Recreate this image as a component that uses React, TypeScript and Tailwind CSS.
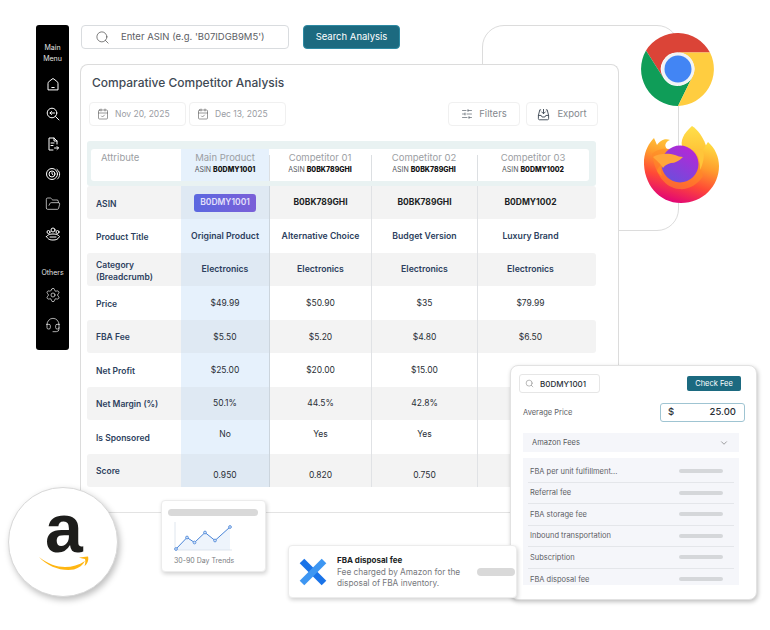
import React from "react";
import { CalendarCheck, ChevronDown, FolderOpen, Headset, Search, Settings, SlidersHorizontal } from "lucide-react";

const rows = [
  { label: "ASIN", values: ["", "B0BK789GHI", "B0BK789GHI", "B0DMY1002"], kind: "code" },
  { label: "Product Title", values: ["Original Product", "Alternative Choice", "Budget Version", "Luxury Brand"], kind: "name" },
  { label: "Category (Breadcrumb)", values: ["Electronics", "Electronics", "Electronics", "Electronics"], kind: "name" },
  { label: "Price", values: ["$49.99", "$50.90", "$35", "$79.99"], kind: "num" },
  { label: "FBA Fee", values: ["$5.50", "$5.20", "$4.80", "$6.50"], kind: "num" },
  { label: "Net Profit", values: ["$25.00", "$20.00", "$15.00", ""], kind: "num" },
  { label: "Net Margin (%)", values: ["50.1%", "44.5%", "42.8%", ""], kind: "num" },
  { label: "Is Sponsored", values: ["No", "Yes", "Yes", ""], kind: "sponsored" },
  { label: "Score", values: ["0.950", "0.820", "0.750", ""], kind: "score" },
];

const fees = ["FBA per unit fulfillment...", "Referral fee", "FBA storage fee", "Inbound transportation", "Subscription", "FBA disposal fee"];

function SideIcon({ children }: { children: React.ReactNode }) {
  return (
    <svg width="16" height="16" viewBox="0 0 16 16" fill="none" stroke="white" strokeWidth="1" strokeLinecap="round" strokeLinejoin="round">
      {children}
    </svg>
  );
}

function Sidebar() {
  return (
    <div className="w-[33px] h-[325px] shrink-0 bg-black rounded-[3px] flex flex-col items-center pt-[17px] text-[#e4e4e4] text-[7px] leading-[11px]">
      <span className="text-center">Main<br />Menu</span>
      <div className="flex flex-col items-center gap-[14px] mt-[12px] text-white">
        <SideIcon>
          <path d="M3 13.5V7.5C3 6.5 3.6 5.8 4.3 5.2L8 2.5L11.7 5.2C12.4 5.8 13 6.5 13 7.5V13.5Z" />
          <path d="M6.8 11.5H9.2" />
        </SideIcon>
        <SideIcon>
          <circle cx="7" cy="7" r="4.8" />
          <path d="M10.5 10.5L14 14M9.5 7H5M6.5 5.5L5 7L6.5 8.5" />
        </SideIcon>
        <SideIcon>
          <path d="M8 14H4V2H9L12 5V8M9 2V5H12" />
          <path d="M6 7H9M6 9.5H8M9.5 12H13.5M12 10.5L13.5 12L12 13.5" />
        </SideIcon>
        <SideIcon>
          <circle cx="7" cy="8" r="5.5" />
          <circle cx="7" cy="8" r="3" />
          <path d="M12 3.5C14 5 15 7 14.5 9.5C14.2 11 13.5 12 12.5 13" />
          <path d="M7 6.5V8L8 8.7" />
        </SideIcon>
        <FolderOpen size={16} strokeWidth={1} />
        <SideIcon>
          <circle cx="8" cy="4" r="2" />
          <circle cx="3.5" cy="6" r="1.5" />
          <circle cx="12.5" cy="6" r="1.5" />
          <path d="M1.5 10.5C3 8.5 5 8 8 8C11 8 13 8.5 14.5 10.5C13 13.5 11 14 8 14C5 14 3 13.5 1.5 10.5Z" />
          <path d="M5 11H11" />
        </SideIcon>
      </div>
      <span className="mt-[25px]">Others</span>
      <div className="flex flex-col items-center gap-[14px] mt-[9px] text-white">
        <Settings size={16} strokeWidth={1} />
        <Headset size={16} strokeWidth={1} />
      </div>
    </div>
  );
}

function ExportIcon() {
  return (
    <svg width="13" height="13" viewBox="0 0 14 14" fill="none" stroke="#3f4a55" strokeWidth="1" strokeLinecap="round" strokeLinejoin="round">
      <path d="M4 2H3L1.5 8V11.5C1.5 12.3 2 12.7 2.7 12.7H11.3C12 12.7 12.5 12.3 12.5 11.5V8L11 2H10" />
      <path d="M1.5 8H4.5L5.5 9.7H8.5L9.5 8H12.5" />
      <path d="M7 1.5V6M5 4.2L7 6.2L9 4.2" />
    </svg>
  );
}

function Toolbar() {
  return (
    <div className="flex items-center mt-[11px] ml-[2px] text-[#9a9da3] text-[8.5px]">
      <div className="w-[97px] h-[24px] border border-[#f0f0f0] rounded-[4px] flex items-center pl-[7px] gap-[6px]">
        <CalendarCheck size={12} strokeWidth={1.2} className="text-[#555]" />
        Nov 20, 2025
      </div>
      <div className="w-[97px] h-[24px] ml-[3px] border border-[#f0f0f0] rounded-[4px] flex items-center pl-[7px] gap-[6px]">
        <CalendarCheck size={12} strokeWidth={1.2} className="text-[#555]" />
        Dec 13, 2025
      </div>
      <div className="w-[72px] h-[24px] ml-[162px] border border-[#f0f0f0] rounded-[4px] flex items-center justify-center gap-[6px] text-[#84888e] text-[9.5px]">
        <SlidersHorizontal size={12} strokeWidth={1.2} className="text-[#3f4a55]" />
        Filters
      </div>
      <div className="w-[72px] h-[24px] ml-[6px] border border-[#f0f0f0] rounded-[4px] flex items-center justify-center gap-[7px] text-[#84888e] text-[9.5px]">
        <ExportIcon />
        Export
      </div>
    </div>
  );
}

function HeadCell({ title, asin, line }: { title: string; asin: string; line?: boolean }) {
  return (
    <div className="relative flex flex-col items-center pt-[3px]">
      {line && <span className="absolute left-0 top-[6px] bottom-0 w-px bg-[#dcdfe2]" />}
      <span className="text-[9.5px] leading-[11px] text-[#9b9ea3]">{title}</span>
      <span className="text-[7px] leading-[14px] text-[#55585c]">
        ASIN <b className="font-extrabold text-[#111]">{asin}</b>
      </span>
    </div>
  );
}

function CompareTable() {
  return (
    <div className="mt-[15px] w-[509px] text-[9px]">
      <div className="h-[45px] bg-[#e9f2f2] rounded-[3px] pt-[8px] pl-[4px] pr-[7px]">
        <div className="h-[32px] bg-white rounded-[3px] grid grid-cols-[90px_88px_102px_106px_112px]">
          <div className="pl-[10px] pt-[3px] text-[9.5px] leading-[11px] text-[#9b9ea3]">Attribute</div>
          <div className="bg-[#e6f1fc]">
            <HeadCell title="Main Product" asin="B0DMY1001" />
          </div>
          <HeadCell title="Competitor 01" asin="B0BK789GHI" line />
          <HeadCell title="Competitor 02" asin="B0BK789GHI" line />
          <HeadCell title="Competitor 03" asin="B0DMY1002" line />
        </div>
      </div>
      <div className="h-[301px] flex flex-col">
        {rows.map((row, i) => {
          const shaded = i % 2 === 0;
          const valueClass =
            row.kind === "code"
              ? "font-bold text-[#1c1f24] text-[8.5px]"
              : row.kind === "name"
                ? "font-semibold text-[#2d3f5e] text-[8.7px]"
                : row.kind === "sponsored"
                  ? "text-[#2a2f36] text-[8.5px] pb-[4px]"
                  : row.kind === "score"
                    ? "text-[#2a2f36] text-[8.5px] pt-[10px]"
                    : "text-[#2a2f36] text-[8.5px] pt-px";
          return (
            <div
              key={row.label}
              className={`flex-1 grid grid-cols-[94px_88px_102px_106px_119px] rounded-[3px] ${shaded ? "bg-[#f3f3f3]" : "bg-white"}`}
            >
              <div className="pl-[9px] pr-[6px] pt-[2px] flex items-center font-semibold text-[8.5px] leading-[12px] text-[#2d3f5e]">{row.label}</div>
              {row.values.map((v, j) => (
                <div
                  key={j}
                  className={`flex items-center justify-center ${valueClass} ${
                    j === 0 ? (shaded ? "bg-[#dfe9f3]" : "bg-[#e6f1fc]") : j === 1 ? "border-l border-[#ccd5dd]" : "border-l border-[#e0e2e5]"
                  } ${j === 3 ? "pr-[13px]" : ""}`}
                >
                  {row.kind === "code" && j === 0 ? (
                    <span className="w-[62px] h-[18px] rounded-[3px] bg-gradient-to-r from-[#5b68e0] to-[#7a5fd8] text-[#e4e1fb] font-semibold flex items-center justify-center">
                      B0DMY1001
                    </span>
                  ) : (
                    v
                  )}
                </div>
              ))}
            </div>
          );
        })}
      </div>
    </div>
  );
}

function ChromeLogo() {
  return (
    <svg width="74" height="74" viewBox="0 0 74 74" className="absolute left-[641px] top-[32px]">
      <path d="M37 20.5H69A37 37 0 0 0 5 18.5L22.5 46A16.5 16.5 0 0 1 37 20.5Z" fill="#db4437" />
      <path d="M5 18.5A37 37 0 0 0 37 74L51 45.5A16.5 16.5 0 0 1 22.5 46Z" fill="#0f9d58" />
      <path d="M69 20.5A37 37 0 0 1 37 74L51 45.5A16.5 16.5 0 0 0 37 20.5Z" fill="#ffcd40" />
      <circle cx="37" cy="37" r="16.5" fill="#f1f3f4" />
      <circle cx="37" cy="37" r="13.5" fill="#4285f4" />
    </svg>
  );
}

function FirefoxLogo() {
  return (
    <svg width="77" height="77" viewBox="0 0 77 77" className="absolute left-[643px] top-[126px]">
      <defs>
        <linearGradient id="ffBody" x1="0.7" y1="0.05" x2="0.35" y2="1">
          <stop offset="0" stopColor="#ffd83f" />
          <stop offset="0.35" stopColor="#ff9b2c" />
          <stop offset="0.65" stopColor="#ff4a36" />
          <stop offset="1" stopColor="#e0007a" />
        </linearGradient>
        <linearGradient id="ffFlame" x1="0.5" y1="0" x2="0.5" y2="1">
          <stop offset="0" stopColor="#ffe04a" />
          <stop offset="1" stopColor="#ffb52e" />
        </linearGradient>
        <linearGradient id="ffGlobe" x1="0.8" y1="0" x2="0.2" y2="1">
          <stop offset="0" stopColor="#b925d6" />
          <stop offset="1" stopColor="#6a4fdc" />
        </linearGradient>
      </defs>
      <path d="M49 0C41 7 36 15 40 23L63 38C68 27 61 8 49 0Z" fill="url(#ffFlame)" />
      <path d="M1 34C2 24 6 17 11 12L14 19C17 15 21 12 27 14C22 16 21 20 24 23L60 24L65 16C72 22 76 31 76 40C76 60 60 77 38 77C16 77 0 58 1 34Z" fill="url(#ffBody)" />
      <path d="M9 28C15 22 24 22 30 24L54 30L60 50C54 60 44 64 36 63C22 62 12 48 9 28Z" fill="#ff8a26" opacity="0.6" />
      <circle cx="37" cy="38" r="18.5" fill="url(#ffGlobe)" />
      <path d="M14 44C16 40 19 37 23 36.500L19.500 38C18 42 17 46 19 50C16 48 14 46 14 44Z" fill="#ff8a26" />
      <path d="M10 31C16 27 26 27 32 29C35 30 37 31 40 31C36 35 32 37 28 37C25 38 22 39 20 42C18 38 13 34 10 31Z" fill="#ffa73a" />
      <path d="M49 22C54 26 58 34 57 44C60 38 62 30 60 24Z" fill="#ffc53a" />
    </svg>
  );
}

function AmazonBadge() {
  return (
    <div className="absolute left-[8px] top-[487px] w-[110px] h-[110px] rounded-full bg-white border border-[#d8d8d8] shadow-[2px_3px_6px_rgba(0,0,0,0.25)]">
      <span className="absolute left-[36px] top-[6px] text-[68px] leading-[68px] font-bold text-[#1d1d1b] [font-family:'Liberation_Sans',sans-serif]">a</span>
      <svg width="52" height="16" viewBox="0 0 52 16" className="absolute left-[29px] top-[67px]">
        <path d="M1 2C10 9 19 12 27 12C34 12 41 10 47 6C45 10 41 13 36 14.5C24 16.5 10 12 1 2Z" fill="#ffb612" />
        <path d="M41 2.5L50 1.5C51 5 49.5 9 46.5 11C47.5 8.5 47.5 5.5 47 4C45.5 3.5 43 3.5 41 2.5Z" fill="#ffb612" />
      </svg>
    </div>
  );
}

function TrendCard() {
  return (
    <div className="absolute left-[161px] top-[500px] w-[105px] h-[72px] bg-white rounded-[4px] border border-[#ececec] shadow-[1px_2px_4px_rgba(0,0,0,0.18)] flex flex-col px-[6px] pt-[8px]">
      <div className="h-[7px] w-[90px] bg-[#d9d9d9] rounded-full" />
      <svg width="60" height="30" viewBox="0 0 60 30" className="mt-[6px] ml-[6px]">
        <path d="M2 27L13 15.5L20.5 20.5L31 10.5L41 18.5L56 5V28H2Z" fill="#eef4fc" />
        <path d="M1 0V28H58" fill="none" stroke="#d7dfea" strokeWidth="0.8" />
        <path d="M2 27L13 15.5L20.5 20.5L31 10.5L41 18.5L56 5" fill="none" stroke="#4a85d8" strokeWidth="1" />
        {[[2, 27], [13, 15.5], [20.5, 20.5], [31, 10.5], [41, 18.5], [56, 5]].map(([x, y]) => (
          <circle key={x} cx={x} cy={y} r="1.4" fill="#cfe0f7" stroke="#4a85d8" strokeWidth="0.8" />
        ))}
      </svg>
      <span className="mt-[4px] ml-[6px] text-[7px] leading-[10px] text-[#7a7d82] whitespace-nowrap">30-90 Day Trends</span>
    </div>
  );
}

function DisposalCard() {
  return (
    <div className="absolute left-[288px] top-[545px] w-[229px] h-[53px] bg-white rounded-[4px] border border-[#ececec] shadow-[1px_2px_4px_rgba(0,0,0,0.18)] flex items-center pl-[10px] z-20">
      <svg width="28" height="28" viewBox="0 0 28 28" className="shrink-0">
        <path d="M3 3L25 25" stroke="#1a73e8" strokeWidth="6.5" />
        <path d="M25 3L3 25" stroke="#3d96f2" strokeWidth="6.5" />
      </svg>
      <div className="ml-[10px] w-[132px]">
        <p className="text-[8px] leading-[11px] font-bold text-[#1c1f24]">FBA disposal fee</p>
        <p className="text-[8.3px] leading-[11px] mt-px text-[#77797d]">Fee charged by Amazon for the disposal of FBA inventory.</p>
      </div>
      <div className="ml-[8px] w-[38px] h-[8px] rounded-full bg-[#d9d9d9]" />
    </div>
  );
}

function FeeCard() {
  return (
    <div className="absolute left-[510px] top-[365px] w-[247px] h-[235px] bg-white rounded-[8px] border border-[#e2e2e2] shadow-[1px_2px_4px_rgba(0,0,0,0.25)] p-[8px] z-10">
      <div className="flex items-center justify-between pr-[7px]">
        <div className="w-[81px] h-[19px] border border-[#e6e6e6] rounded-[3px] flex items-center pl-[5px] gap-[6px] text-[8px] font-medium text-[#2a2f36]">
          <Search size={9} strokeWidth={1.2} className="text-[#666]" />
          B0DMY1001
        </div>
        <div className="w-[54px] h-[15px] bg-[#1c6a80] rounded-[2px] text-white text-[7.5px] flex items-center justify-center">Check Fee</div>
      </div>
      <div className="flex items-center justify-between mt-[10px] pl-[4px] pr-[3px]">
        <span className="text-[7.5px] text-[#5d6065]">Average Price</span>
        <div className="w-[85px] h-[19px] border border-[#9fc4d2] rounded-[3px] flex items-center justify-between pl-[7px] pr-[8px] text-[9.5px] font-medium text-[#2a2f36]">
          <span>$</span>
          <span>25.00</span>
        </div>
      </div>
      <div className="ml-[4px] mr-[9px] mt-[11px] h-[19px] bg-[#f5f6fa] flex items-center justify-between pl-[9px] pr-[10px] text-[7.5px] text-[#55585c]">
        Amazon Fees
        <ChevronDown size={10} strokeWidth={1.2} className="text-[#444]" />
      </div>
      <div className="ml-[4px] mr-[9px] mt-[6px] h-[127px] bg-[#f5f6fa] px-[5px] pt-[3px] overflow-hidden">
        {fees.map((fee) => (
          <div key={fee} className="h-[21.5px] flex items-center justify-between border-b border-[#e4e6ea] pl-[2px] pr-[11px] text-[7.5px] text-[#5d6065] last:border-b-0">
            {fee}
            <span className="w-[44px] h-[4px] rounded-full bg-[#d5d7da]" />
          </div>
        ))}
      </div>
    </div>
  );
}

export default function App() {
  return (
    <div className="relative w-[770px] h-[630px] bg-white overflow-hidden font-['Inter',sans-serif]">
      <div className="absolute left-[482px] top-[25px] w-[197px] h-[206px] rounded-[22px] border border-[#dcdcdc]" />
      <div className="relative flex items-start gap-[11px] pl-[36px] pt-[25px]">
        <Sidebar />
        <div>
          <div className="flex items-center gap-[14px] ml-[1px]">
            <div className="w-[208px] h-[24px] border border-[#d9dcdf] rounded-[4px] bg-white flex items-center pl-[13px] gap-[11px] text-[9.5px] text-[#5d6065]">
              <Search size={15} strokeWidth={1.1} className="text-[#444]" />
              <span className="pt-px">Enter ASIN (e.g. 'B07IDGB9M5')</span>
            </div>
            <div className="w-[97px] h-[24px] rounded-[4px] bg-[#1c6a80] border border-[#2e8aa3] text-white text-[9.5px] flex items-center justify-center pt-px">Search Analysis</div>
          </div>
          <div className="mt-[15px] w-[539px] h-[449px] bg-white rounded-t-[8px] border border-[#dcdcdc] border-b-[#e3e3e3] pl-[6px]">
            <h2 className="ml-[5px] mt-[9px] text-[12px] leading-[17px] font-medium text-[#3f4a55]">Comparative Competitor Analysis</h2>
            <Toolbar />
            <CompareTable />
          </div>
        </div>
      </div>
      <ChromeLogo />
      <FirefoxLogo />
      <AmazonBadge />
      <TrendCard />
      <FeeCard />
      <DisposalCard />
    </div>
  );
}
